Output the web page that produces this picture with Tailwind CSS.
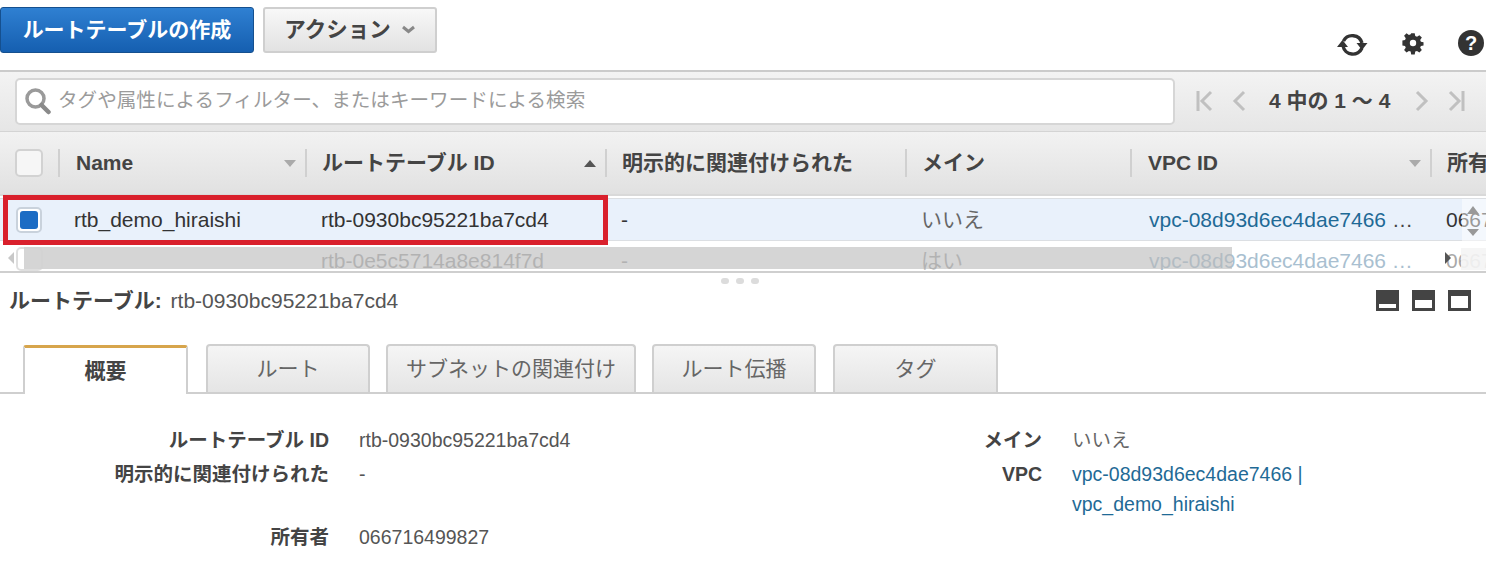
<!DOCTYPE html>
<html lang="ja">
<head>
<meta charset="UTF-8">
<title>ルートテーブル</title>
<script src="https://cdn.jsdelivr.net/npm/@tailwindcss/browser@4"></script>
</head>
<body class="bg-white overflow-hidden font-['Liberation_Sans','Noto_Sans_CJK_JP',sans-serif] text-[#444]">
<div class="relative w-[1486px] h-[566px] overflow-hidden">

  <!-- toolbar -->
  <div class="flex h-[70px] pt-[7px] relative">
    <button class="w-[254px] h-[46px] rounded-[3px] border border-[#15508f] bg-gradient-to-b from-[#2f80d2] to-[#155fb0] text-white font-bold text-[21px]">ルートテーブルの作成</button>
    <button class="ml-[9px] w-[174px] h-[46px] rounded-[3px] border-2 border-[#cfcfcf] bg-gradient-to-b from-[#f8f8f8] to-[#e2e2e2] text-[#444] font-bold text-[21.500px] flex items-center justify-center gap-[10px]">
      アクション
      <svg width="15" height="10" viewBox="0 0 15 10"><path d="M2 2l5.500 4.500L13 2" fill="none" stroke="#888" stroke-width="3"/></svg>
    </button>
    <div class="flex items-center gap-[32px] h-[28px] absolute left-[1337px] top-[29px]">
      <svg width="32" height="28" viewBox="0 0 32 28"><path d="M6.500 12A10 10 0 0 1 25 14" fill="none" stroke="#333" stroke-width="3.400"/><path d="M19.500 14h11L25 21z" fill="#333"/><path d="M25 19A10 10 0 0 1 6 17" fill="none" stroke="#333" stroke-width="3.400"/><path d="M0 18h11L5.500 11z" fill="#333"/></svg>
      <svg width="24" height="24" viewBox="0 0 24 24"><path d="M10 1h4l.6 3.200 2 .8 2.700-1.900 2.800 2.800-1.900 2.700.8 2 3 .6v3.600l-3 .6-.8 2 1.900 2.700-2.800 2.800-2.700-1.900-2 .8-.6 3.200h-4l-.6-3.200-2-.8-2.700 1.900-2.800-2.800 1.900-2.700-.8-2-3-.6V9.200l3-.6.8-2L1.900 3.900 4.700 1.100l2.700 1.900 2-.8z" fill="#333" transform="translate(1.400 1.400) scale(.88)"/><circle cx="12" cy="12" r="3.200" fill="#fff"/></svg>
      <div class="ml-[1px] w-[26px] h-[26px] rounded-full bg-[#333] text-white font-bold text-[20px] leading-[26px] text-center">?</div>
    </div>
  </div>

  <!-- filter bar -->
  <div class="h-[61px] border-t-2 border-[#cbcbcb] bg-gradient-to-b from-[#f3f3f3] to-[#e6e6e6] flex items-center pl-[15px] pb-[1px]">
    <div class="w-[1160px] h-[47px] bg-white border-2 border-[#d6d6d6] rounded-[5px] flex items-center pl-[7px] gap-[6px]">
      <svg width="28" height="28" viewBox="0 0 28 28"><circle cx="11.500" cy="11.500" r="8.500" fill="none" stroke="#9a9a9a" stroke-width="3.500"/><path d="M17.500 18l7 7" stroke="#8a8a8a" stroke-width="4.500" stroke-linecap="round"/></svg>
      <span class="text-[19.600px] text-[#9b9b9b]">タグや属性によるフィルター、またはキーワードによる検索</span>
    </div>
    <div class="flex items-center ml-[21px] gap-[18px]">
      <svg width="18" height="22" viewBox="0 0 18 22"><path d="M2 1v20M15 2L6 11l9 9" fill="none" stroke="#c0c0c0" stroke-width="3"/></svg>
      <svg width="14" height="22" viewBox="0 0 14 22"><path d="M12 2L3 11l9 9" fill="none" stroke="#c0c0c0" stroke-width="3"/></svg>
      <span class="font-bold text-[21px] text-[#444] ml-[5px] w-[122px] whitespace-nowrap">4 中の 1 ～ 4</span>
      <svg width="14" height="22" viewBox="0 0 14 22" class="ml-[6px]"><path d="M2 2l9 9-9 9" fill="none" stroke="#c0c0c0" stroke-width="3"/></svg>
      <svg width="18" height="22" viewBox="0 0 18 22"><path d="M16 1v20M3 2l9 9-9 9" fill="none" stroke="#c0c0c0" stroke-width="3"/></svg>
    </div>
  </div>

  <!-- table -->
  <div class="relative h-[141px]">
    <div class="h-[65px] bg-gradient-to-b from-[#f2f2f2] to-[#e1e1e1] border-t border-[#d4d4d4] border-b-2 border-b-[#d9d9d9] flex items-center text-[21px] font-bold text-[#444] whitespace-nowrap overflow-hidden">
      <div class="w-[58px] pl-[15px] shrink-0"><div class="w-[28px] h-[28px] rounded-[5px] border-2 border-[#d2d2d2] bg-[#f6f6f6]"></div></div>
      <div class="w-[247px] h-[28px] shrink-0 border-l-2 border-[#d0d0d0] pl-[16px] flex items-center justify-between pr-[9px]">Name<svg width="12" height="7" viewBox="0 0 12 7"><path d="M0 0h12L6 7z" fill="#aaa"/></svg></div>
      <div class="w-[300px] h-[28px] shrink-0 border-l-2 border-[#d0d0d0] pl-[15px] flex items-center justify-between pr-[9px]">ルートテーブル ID<svg width="12" height="7" viewBox="0 0 12 7"><path d="M0 7h12L6 0z" fill="#555"/></svg></div>
      <div class="w-[300px] h-[28px] shrink-0 border-l-2 border-[#d0d0d0] pl-[15px] flex items-center">明示的に関連付けられた</div>
      <div class="w-[225px] h-[28px] shrink-0 border-l-2 border-[#d0d0d0] pl-[15px] flex items-center">メイン</div>
      <div class="w-[300px] h-[28px] shrink-0 border-l-2 border-[#d0d0d0] pl-[16px] flex items-center justify-between pr-[9px]">VPC ID<svg width="12" height="7" viewBox="0 0 12 7"><path d="M0 0h12L6 7z" fill="#aaa"/></svg></div>
      <div class="w-[56px] h-[28px] shrink-0 border-l-2 border-[#d0d0d0] pl-[15px] flex items-center">所有者</div>
    </div>

    <div class="mt-[2px] h-[43px] pt-[1px] bg-[#e9f1fb] border-y border-[#dcdfe3] flex items-center text-[21px] text-[#333] whitespace-nowrap overflow-hidden">
      <div class="w-[59px] pl-[16px] shrink-0"><div class="w-[26px] h-[26px] rounded-[5px] border-2 border-[#c9d2dc] bg-white p-[2px]"><div class="w-full h-full rounded-[3px] bg-[#1c6cc4]"></div></div></div>
      <div class="w-[247px] pl-[15px] shrink-0">rtb_demo_hiraishi</div>
      <div class="w-[300px] pl-[15px] shrink-0">rtb-0930bc95221ba7cd4</div>
      <div class="w-[300px] pl-[15px] shrink-0">-</div>
      <div class="w-[225px] pl-[15px] shrink-0 text-[#666]">いいえ</div>
      <div class="w-[300px] pl-[18px] shrink-0 text-[#1f6a96]">vpc-08d93d6ec4dae7466 <span class="text-[#444]">…</span></div>
      <div class="pl-[15px] shrink-0">066716499827</div>
    </div>

    <div class="mt-[5px] h-[24px] flex text-[21px] text-[#a9a9a9] whitespace-nowrap overflow-hidden leading-[29px]">
      <div class="w-[306px] shrink-0"></div>
      <div class="w-[300px] pl-[15px] shrink-0">rtb-0e5c5714a8e814f7d</div>
      <div class="w-[300px] pl-[15px] shrink-0">-</div>
      <div class="w-[225px] pl-[15px] shrink-0">はい</div>
      <div class="w-[300px] pl-[18px] shrink-0 text-[#a9bfd0]">vpc-08d93d6ec4dae7466 …</div>
      <div class="pl-[15px] shrink-0">066716499827</div>
    </div>

    <!-- scrollbars over the rows -->
    <div class="absolute left-[24px] top-[116px] w-[1208px] h-[22px] bg-[#b9b9b9]/60"></div>
    <div class="absolute left-[16px] top-[116px] w-[27px] h-[24px] rounded-[5px] border-2 border-[#d2d2d2]/70"></div>
    <div class="absolute left-[8px] top-[121px] w-0 h-0 border-y-[6px] border-y-transparent border-r-[6px] border-r-[#c8c8c8]"></div>
    <div class="absolute left-[1462px] top-[68px] w-[24px] h-[45px] bg-white/50"></div>
    <div class="absolute left-[1461px] top-[117px] w-[25px] h-[22px] bg-[#f4f4f4]/90"></div>
    <div class="absolute left-[1445px] top-[121px] w-0 h-0 border-y-[6px] border-y-transparent border-l-[6px] border-l-[#555]"></div>
    <div class="absolute left-[1467px] top-[75px] w-0 h-0 border-x-[6px] border-x-transparent border-b-[8px] border-b-[#999]"></div>
    <div class="absolute left-[1467px] top-[98px] w-0 h-0 border-x-[6px] border-x-transparent border-t-[7px] border-t-[#999]"></div>
  </div>

  <!-- red highlight -->
  <div class="absolute left-[3px] top-[195px] w-[605px] h-[50px] border-[5px] border-[#d9202c]"></div>

  <!-- splitter -->
  <div class="h-[2px] bg-[#cfcfcf] -mt-[1px]"></div>
  <div class="flex justify-center gap-[7px] h-[14px] pt-[5px] pr-[6px]">
    <div class="w-[8px] h-[6px] rounded-full bg-[#dcdcdc]"></div>
    <div class="w-[8px] h-[6px] rounded-full bg-[#dcdcdc]"></div>
    <div class="w-[8px] h-[6px] rounded-full bg-[#dcdcdc]"></div>
  </div>

  <!-- detail header -->
  <div class="flex items-center justify-between h-[30px] -mt-[1px] pl-[9px] pr-[15px]">
    <div class="text-[21px] text-[#444] whitespace-nowrap"><span class="font-bold mr-[3px]">ルートテーブル:</span> <span class="text-[#555]">rtb-0930bc95221ba7cd4</span></div>
    <div class="flex gap-[13px] -mt-[1px]">
      <div class="w-[23px] h-[21px] bg-[#444] flex items-end p-[3px]"><div class="w-full h-[4px] bg-white"></div></div>
      <div class="w-[23px] h-[21px] bg-[#444] flex items-end p-[3px]"><div class="w-full h-[8px] bg-white"></div></div>
      <div class="w-[23px] h-[21px] bg-[#444] flex items-end p-[3px] pt-[6px]"><div class="w-full h-full bg-white"></div></div>
    </div>
  </div>

  <!-- tabs -->
  <div class="flex items-end h-[49px] mt-[29px] pl-[23px] gap-[17px] border-b-2 border-[#cfcfcf] text-[21px]">
    <div class="relative -mb-[2px] w-[165px] h-[49px] bg-white border-x-2 border-[#cfcfcf] border-t-[3px] border-t-[#d7a54c] rounded-t-[3px] flex items-center justify-center font-bold text-[#444]">概要</div>
    <div class="w-[164px] ml-[1px] h-[48px] rounded-t-[4px] border-2 border-b-0 border-[#cfcfcf] bg-gradient-to-b from-[#f5f5f5] to-[#e5e5e5] flex items-center justify-center text-[#666]">ルート</div>
    <div class="w-[250px] -ml-[1px] h-[48px] rounded-t-[4px] border-2 border-b-0 border-[#cfcfcf] bg-gradient-to-b from-[#f5f5f5] to-[#e5e5e5] flex items-center justify-center text-[#666]">サブネットの関連付け</div>
    <div class="w-[164px] -ml-[1px] h-[48px] rounded-t-[4px] border-2 border-b-0 border-[#cfcfcf] bg-gradient-to-b from-[#f5f5f5] to-[#e5e5e5] flex items-center justify-center text-[#666]">ルート伝播</div>
    <div class="w-[165px] h-[48px] rounded-t-[4px] border-2 border-b-0 border-[#cfcfcf] bg-gradient-to-b from-[#f5f5f5] to-[#e5e5e5] flex items-center justify-center text-[#666]">タグ</div>
  </div>

  <!-- details -->
  <div class="flex pt-[31px] text-[19.500px] leading-[30px]">
    <div class="grid grid-cols-[329px_1fr] w-[835px] gap-x-[30px] auto-rows-[34px]">
      <div class="text-right font-bold text-[#444]">ルートテーブル ID</div><div class="text-[#555]">rtb-0930bc95221ba7cd4</div>
      <div class="text-right font-bold text-[#444]">明示的に関連付けられた</div><div class="text-[#555]">-</div>
      <div class="h-[29px]"></div><div></div>
      <div class="text-right font-bold text-[#444] -mt-[5px]">所有者</div><div class="text-[#555] -mt-[5px]">066716499827</div>
    </div>
    <div class="grid grid-cols-[207px_1fr] gap-x-[30px] auto-rows-[34px]">
      <div class="text-right font-bold text-[#444]">メイン</div><div class="text-[#666]">いいえ</div>
      <div class="text-right font-bold text-[#444]">VPC</div>
      <div class="text-[#1f6a96]">vpc-08d93d6ec4dae7466 |<br>vpc_demo_hiraishi</div>
    </div>
  </div>
</div>
</body>
</html>
